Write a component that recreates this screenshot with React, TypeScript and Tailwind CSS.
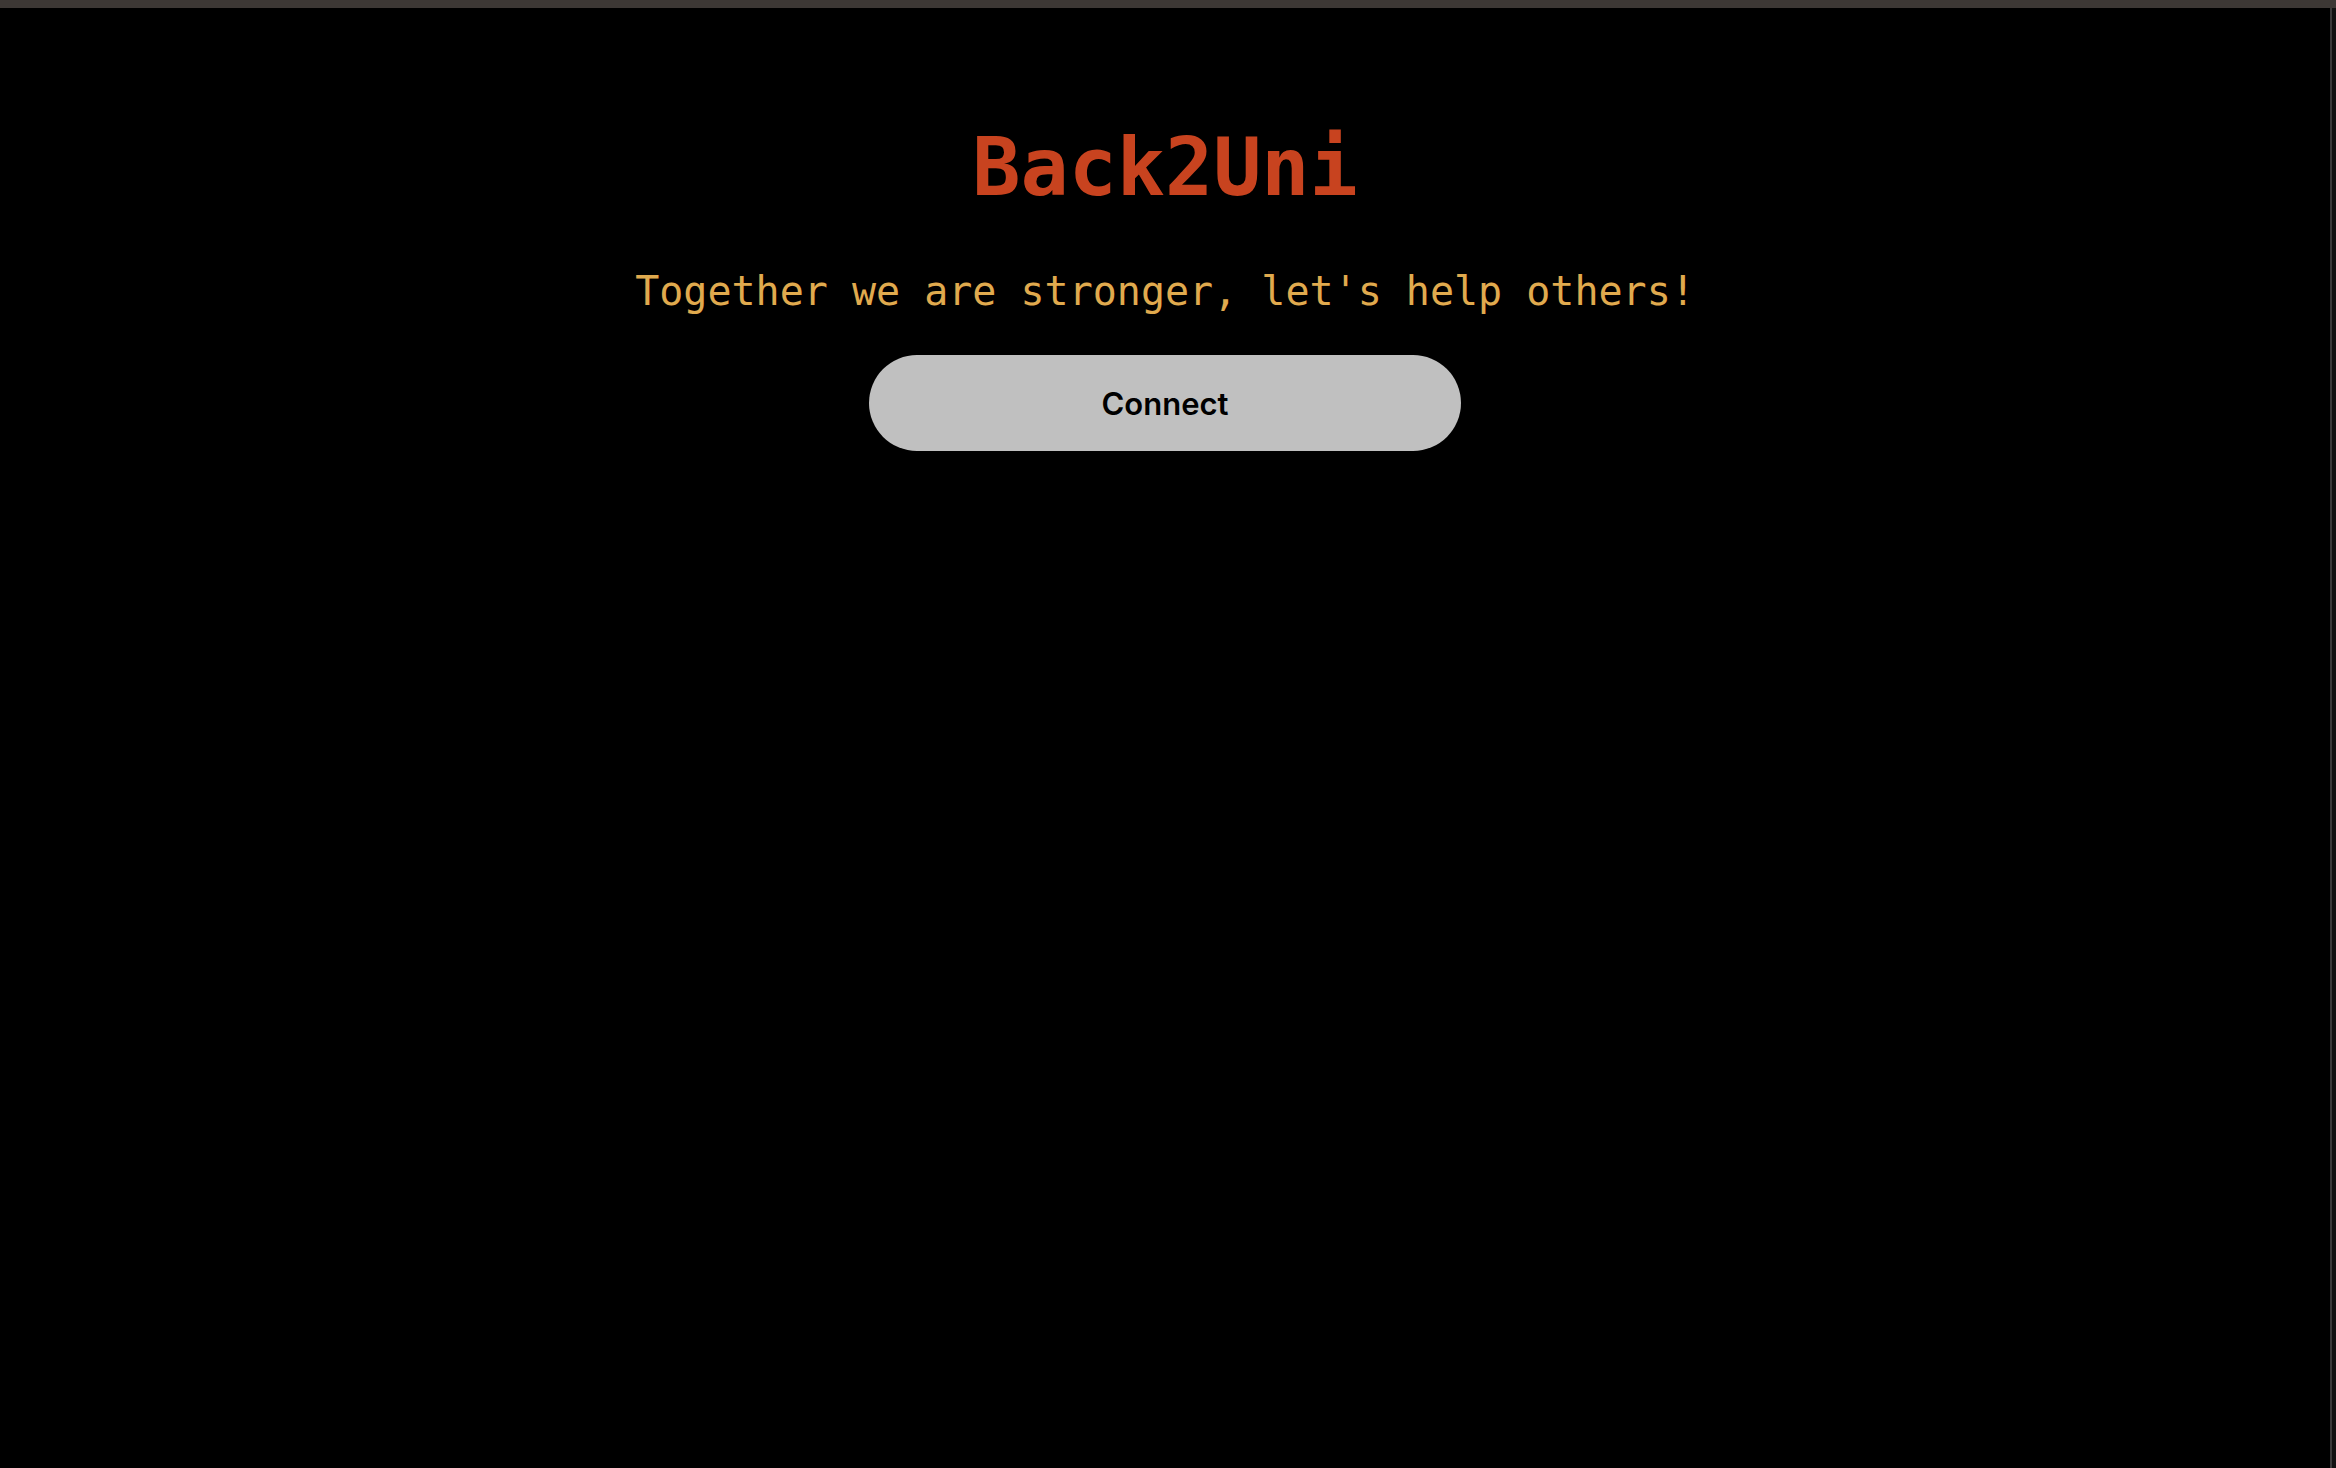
export default function App() {
  return (
    <div className="flex h-screen flex-col overflow-hidden bg-black">
      <div className="h-2 w-full shrink-0 bg-[#3d3835]" />
      <div className="flex flex-1">
        <main className="flex flex-1 flex-col items-center">
          <h1 className="mt-[120px] font-['DejaVu_Sans_Mono',monospace] text-[80px] font-bold leading-none text-[#c8431f]">
            Back2Uni
          </h1>
          <p className="mt-[63px] font-['DejaVu_Sans_Mono',monospace] text-[40px] leading-none text-[#e0aa4e]">
            Together we are stronger, let's help others!
          </p>
          <button className="mt-[44px] h-[96px] w-[592px] rounded-full bg-[#c0c0c0] pt-[3px] font-['Inter',sans-serif] text-[31px] font-semibold text-black">
            Connect
          </button>
        </main>
        <div className="w-[6px] shrink-0 border-l-2 border-[#3a3a3a] bg-[#111]" />
      </div>
    </div>
  );
}
